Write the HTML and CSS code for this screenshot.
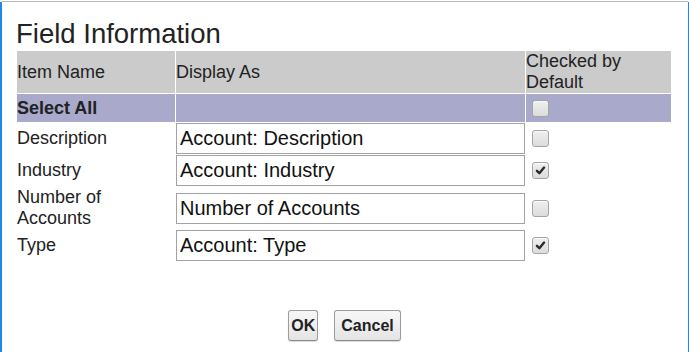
FILE: index.html
```html
<!DOCTYPE html>
<html lang="en">
<head>
  <meta charset="UTF-8">
  <title>Field Information</title>
  <link rel="stylesheet" href="styles.css">
</head>
<body>
  <div class="window">
    <div class="topline"></div>
    <div class="frame">
      <h2 class="title">Field Information</h2>

      <table class="fields">
        <colgroup>
          <col class="col-name">
          <col class="col-display">
          <col class="col-check">
        </colgroup>
        <thead>
          <tr>
            <th>Item Name</th>
            <th>Display As</th>
            <th>Checked by Default</th>
          </tr>
        </thead>
        <tbody>
          <tr class="select-all">
            <td>Select All</td>
            <td></td>
            <td><span class="cb"></span></td>
          </tr>
          <tr>
            <td>Description</td>
            <td><input class="field-input" type="text" value="Account: Description"></td>
            <td><span class="cb"></span></td>
          </tr>
          <tr>
            <td>Industry</td>
            <td><input class="field-input" type="text" value="Account: Industry"></td>
            <td>
              <span class="cb">
                <svg viewBox="0 0 16 16"><path d="M4.2 8.4 L6.8 10.9 L11.8 4.9" fill="none" stroke="#2b2b2b" stroke-width="2.6" stroke-linecap="round" stroke-linejoin="round"/></svg>
              </span>
            </td>
          </tr>
          <tr>
            <td>Number of Accounts</td>
            <td><input class="field-input" type="text" value="Number of Accounts"></td>
            <td><span class="cb"></span></td>
          </tr>
          <tr>
            <td>Type</td>
            <td><input class="field-input" type="text" value="Account: Type"></td>
            <td>
              <span class="cb">
                <svg viewBox="0 0 16 16"><path d="M4.2 8.4 L6.8 10.9 L11.8 4.9" fill="none" stroke="#2b2b2b" stroke-width="2.6" stroke-linecap="round" stroke-linejoin="round"/></svg>
              </span>
            </td>
          </tr>
        </tbody>
      </table>

      <div class="buttons">
        <button class="btn btn-ok">OK</button>
        <button class="btn">Cancel</button>
      </div>
    </div>
  </div>
</body>
</html>
```

FILE: styles.css
```css
* {
  box-sizing: border-box;
  margin: 0;
  padding: 0;
}

body {
  width: 689px;
  height: 352px;
  overflow: hidden;
  font-family: "Liberation Sans", Arial, sans-serif;
  color: #222;
  background-color: white;
}

.window {
  display: flex;
  flex-direction: column;
  height: 352px;
  padding-top: 1px;
}

.topline {
  height: 1px;
  margin: 0 1px 0 2px;
  background-color: #b9b9b9;
}

.frame {
  flex: 1;
  border-left: 2px solid #1e88e5;
  border-right: 1px solid #1e88e5;
  padding: 15px 0 0 14px;
}

.title {
  font-size: 27.5px;
  font-weight: normal;
  line-height: 33px;
  color: #222;
}

.fields {
  border-collapse: separate;
  border-spacing: 1px;
  table-layout: fixed;
  width: 656px;
  font-size: 18px;
  line-height: 21px;
}

.col-name {
  width: 158px;
}

.col-display {
  width: 349px;
}

.col-check {
  width: 145px;
}

.fields th {
  background-color: #cbcbcb;
  font-weight: normal;
  text-align: left;
  vertical-align: middle;
  padding: 0 1px 0 0;
  height: 42px;
}

.fields td {
  vertical-align: middle;
  padding: 0;
}

.select-all td {
  background-color: #a9a9cc;
  font-weight: bold;
  height: 28px;
}

.field-input {
  display: block;
  width: 349px;
  height: 31px;
  padding: 0 3px;
  border: 1px solid #a3a3a3;
  font-family: "Liberation Sans", Arial, sans-serif;
  font-size: 20px;
  color: #111;
  background-color: white;
}

.cb {
  display: block;
  width: 17px;
  height: 17px;
  margin-left: 6px;
  border: 1px solid #a4a4a4;
  border-radius: 3px;
  background: linear-gradient(#efefef, #dcdcdc);
  box-shadow: inset 0 1px 1px rgba(255, 255, 255, 0.8);
}

.cb svg {
  display: block;
  width: 15px;
  height: 15px;
}

.buttons {
  display: flex;
  justify-content: center;
  gap: 16px;
  margin-top: 48px;
  padding-right: 15px;
}

.btn {
  height: 31px;
  padding: 0 6px;
  font-family: "Liberation Sans", Arial, sans-serif;
  font-size: 16px;
  font-weight: bold;
  color: #222;
  background: linear-gradient(#f7f7f7, #e4e4e4);
  border: 1px solid #9c9c9c;
  border-bottom-color: #8a8a8a;
  border-radius: 3px;
  box-shadow: 0 1px 1px rgba(0, 0, 0, 0.15);
}

.btn-ok {
  padding: 0 2px;
}
```
